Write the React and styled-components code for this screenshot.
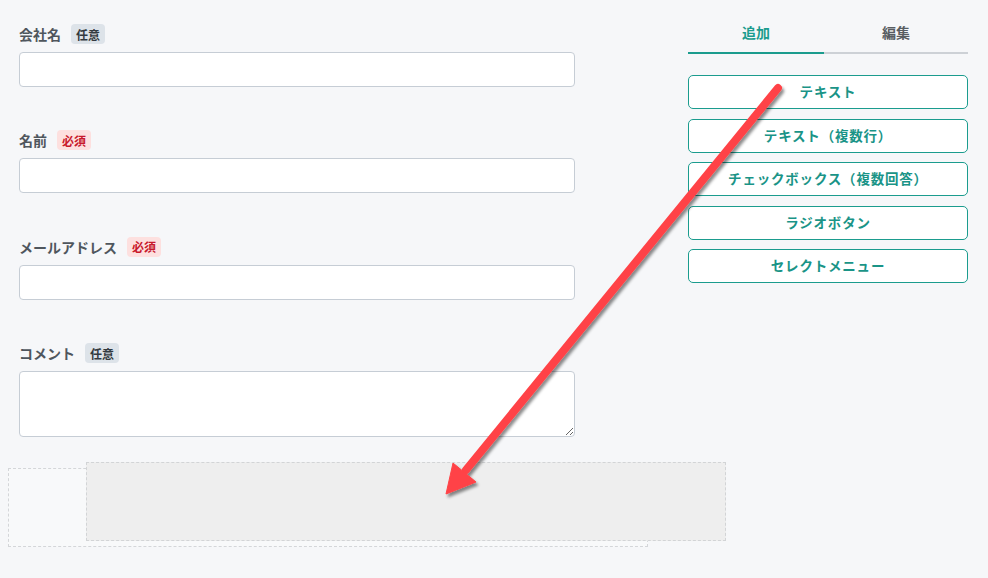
import React from "react";
import styled, { createGlobalStyle } from "styled-components";

const fields = [
  { label: "会社名", required: false },
  { label: "名前", required: true },
  { label: "メールアドレス", required: true },
  { label: "コメント", required: false, multiline: true }
];

const addItems = [
  "テキスト",
  "テキスト（複数行）",
  "チェックボックス（複数回答）",
  "ラジオボタン",
  "セレクトメニュー"
];

export default function App() {
  return (
    <>
      <GlobalStyle />
      <Page>
        <FormColumn>
          <Fields>
            {fields.map((f, i) => (
              <Field key={i}>
                <LabelRow>
                  <Label>{f.label}</Label>
                  <Badge required={f.required}>
                    {f.required ? "必須" : "任意"}
                  </Badge>
                </LabelRow>
                {f.multiline ? <TextArea /> : <Input type="text" />}
              </Field>
            ))}
          </Fields>
          <DropZone>
            <DragGhost />
          </DropZone>
        </FormColumn>
        <Side>
          <Tabs>
            <Tab active>追加</Tab>
            <Tab>編集</Tab>
          </Tabs>
          <ButtonList>
            {addItems.map((t, i) => (
              <AddButton key={i}>{t}</AddButton>
            ))}
          </ButtonList>
        </Side>
        <Arrow width="988" height="578" viewBox="0 0 988 578">
          <defs>
            <filter id="shadow" x="-10%" y="-10%" width="130%" height="130%">
              <feDropShadow dx="2" dy="3" stdDeviation="1.6" floodColor="#000" floodOpacity="0.45" />
            </filter>
          </defs>
          <g filter="url(#shadow)" fill="#ff4346" stroke="#ff4346">
            <line x1="778" y1="88" x2="466" y2="470" strokeWidth="8" strokeLinecap="round" />
            <polygon points="446,494 453,463 476,482" strokeWidth="1" />
          </g>
        </Arrow>
      </Page>
    </>
  );
}

const GlobalStyle = createGlobalStyle`
  html, body {
    margin: 0;
    padding: 0;
    background: #f6f7f9;
  }
  body {
    font-family: "Noto Sans CJK JP", "Noto Sans", sans-serif;
  }
`;

const Page = styled.div`
  position: relative;
  width: 988px;
  height: 578px;
  box-sizing: border-box;
  padding: 24px 20px 0 8px;
  display: flex;
  gap: 40px;
  overflow: hidden;
`;

const FormColumn = styled.div`
  width: 640px;
  display: flex;
  flex-direction: column;
`;

const Fields = styled.div`
  padding-left: 11px;
  width: 556px;
  display: flex;
  flex-direction: column;
  gap: 43.4px;
`;

const Field = styled.div`
  display: flex;
  flex-direction: column;
  gap: 8px;
`;

const LabelRow = styled.div`
  display: flex;
  align-items: center;
  gap: 10px;
  height: 20px;
`;

const Label = styled.span`
  font-size: 14px;
  font-weight: 700;
  color: #4f565d;
  line-height: 20px;
`;

const Badge = styled.span`
  display: inline-flex;
  align-items: center;
  height: 20px;
  padding: 0 5px;
  border-radius: 4px;
  font-size: 12px;
  font-weight: 700;
  background: ${(p) => (p.required ? "#fde0df" : "#dde3e9")};
  color: ${(p) => (p.required ? "#c8182c" : "#333a40")};
`;

const Input = styled.input`
  box-sizing: border-box;
  width: 100%;
  height: 35px;
  margin: 0;
  border: 1px solid #c6cdd5;
  border-radius: 4px;
  background: #fff;
  outline: none;
`;

const TextArea = styled.textarea`
  box-sizing: border-box;
  display: block;
  width: 100%;
  height: 66px;
  margin: 0;
  border: 1px solid #c6cdd5;
  border-radius: 4px;
  background: #fff;
  resize: vertical;
  outline: none;
`;

const DropZone = styled.div`
  position: relative;
  margin-top: 31px;
  width: 640px;
  height: 79px;
  box-sizing: border-box;
  border: 1px dashed #d4d6d9;
  background: #f8f9fa;
`;

const DragGhost = styled.div`
  position: absolute;
  left: 77px;
  top: -7px;
  width: 640px;
  height: 79px;
  box-sizing: border-box;
  border: 1px dashed #d2d4d6;
  background: #eeeeee;
`;

const Side = styled.div`
  width: 280px;
  display: flex;
  flex-direction: column;
`;

const Tabs = styled.div`
  display: flex;
  margin-top: -12px;
`;

const Tab = styled.div`
  flex: ${(p) => (p.active ? "0 0 136px" : "1")};
  text-align: center;
  height: 40px;
  line-height: 40px;
  font-size: 14px;
  font-weight: 700;
  color: ${(p) => (p.active ? "#1b9c8e" : "#585d62")};
  border-bottom: 2px solid ${(p) => (p.active ? "#1b9c8e" : "#cdd1d6")};
`;

const ButtonList = styled.div`
  margin-top: 21px;
  display: flex;
  flex-direction: column;
  gap: 9.5px;
`;

const AddButton = styled.button`
  height: 34px;
  margin: 0;
  padding: 0;
  border: 1px solid #1b9c8e;
  border-radius: 5px;
  background: #fff;
  color: #1a9487;
  font-family: "Noto Sans CJK JP", "Noto Sans", sans-serif;
  font-size: 13.5px;
  line-height: 1;
  font-weight: 700;
  letter-spacing: 0.8px;
  cursor: pointer;
`;

const Arrow = styled.svg`
  position: absolute;
  left: 0;
  top: 0;
  pointer-events: none;
`;
